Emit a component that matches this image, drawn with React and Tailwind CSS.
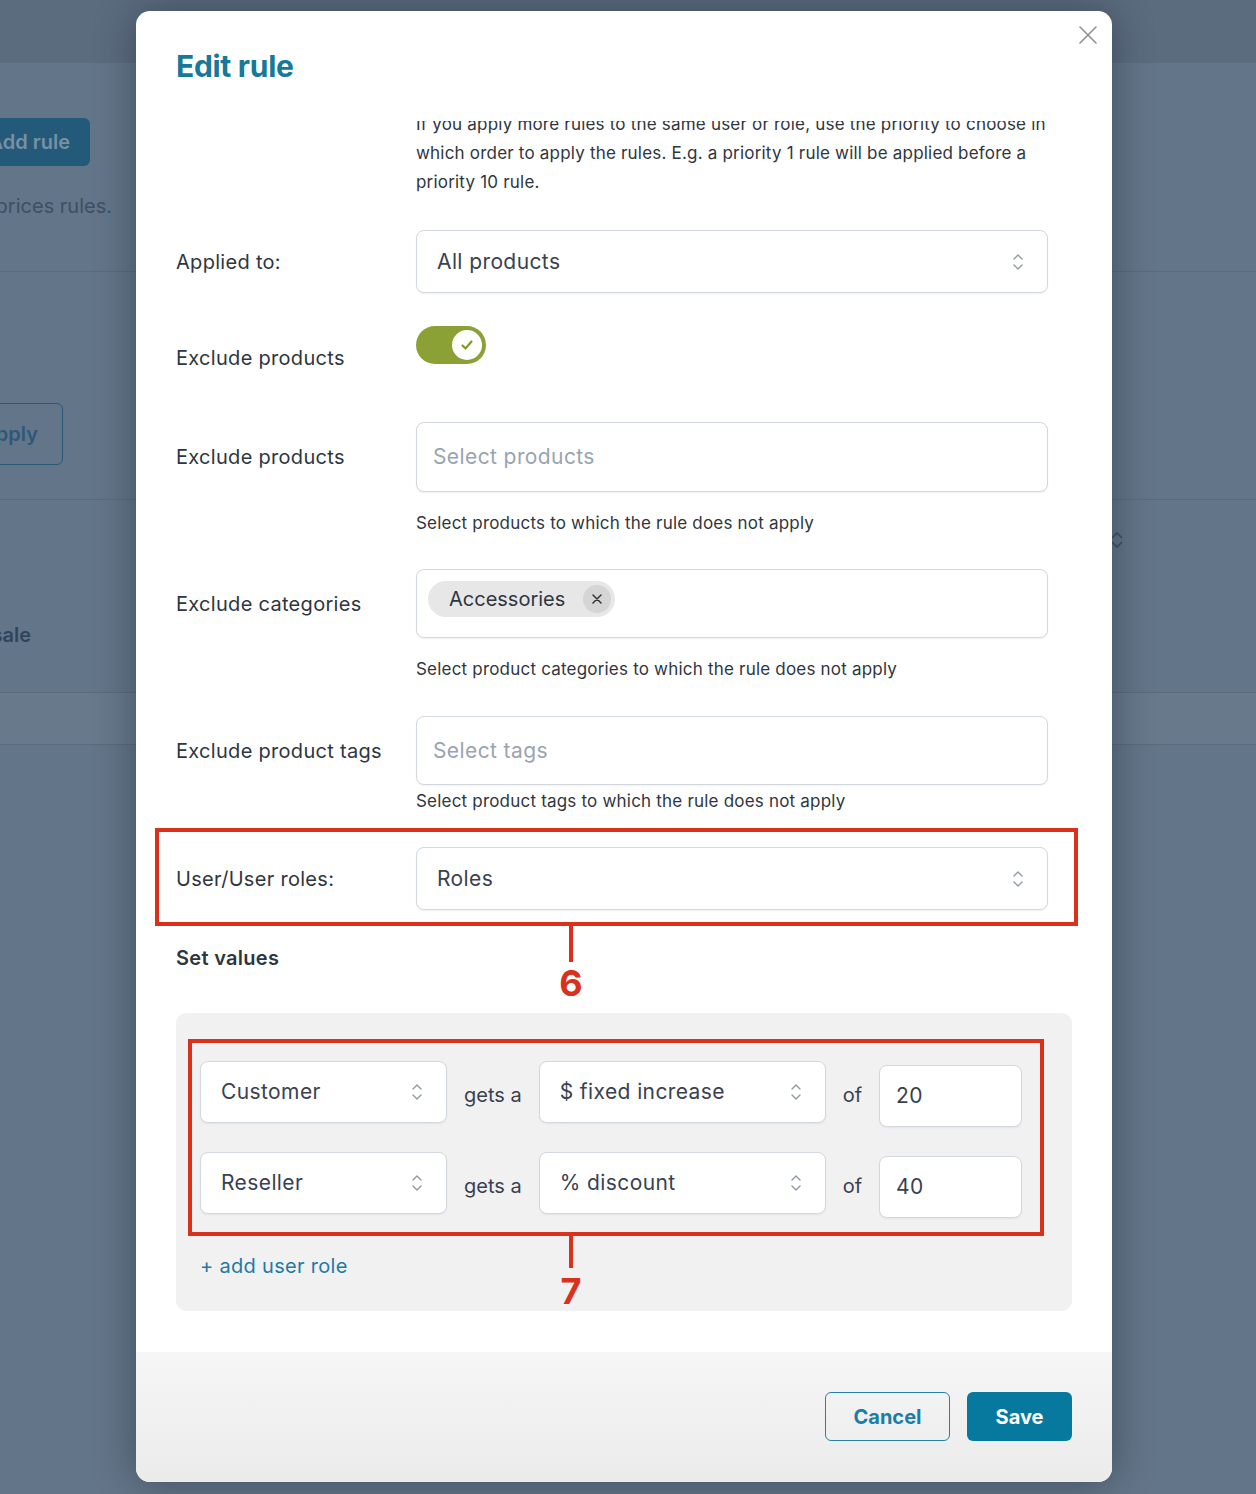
import React from 'react';

const UpDown = ({ className = '' }) => (
  <svg width="12" height="22" viewBox="0 0 12 22" fill="none" stroke="currentColor" strokeWidth="1.4" strokeLinecap="round" strokeLinejoin="round" className={className}>
    <path d="M2 8 L6 4 L10 8" />
    <path d="M2 14 L6 18 L10 14" />
  </svg>
);

const Select = ({ value, className = '' }) => (
  <div className={`flex items-center justify-between rounded-lg border border-[#d3d8de] bg-white pl-5 pr-[23px] shadow-[0_1px_2px_rgba(0,0,0,0.06)] ${className}`}>
    <span className="text-[21px] tracking-[0.4px] text-[#394150]">{value}</span>
    <UpDown className="text-[#8f9aa6]" />
  </div>
);

const Row = ({ label, labelH, className = '', children }) => (
  <div className={`grid grid-cols-[240px_632px] ${className}`}>
    <div className={`flex items-center text-[20px] tracking-[0.3px] text-[#2f3640] ${labelH}`}>{label}</div>
    <div>{children}</div>
  </div>
);

const Help = ({ className = '', children }) => (
  <p className={`text-[17px] leading-6 tracking-[0.2px] text-[#2f3640] ${className}`}>{children}</p>
);

const RoleRow = ({ role, type, amount, className = '' }) => (
  <div className={`flex items-start gap-[17px] ${className}`}>
    <Select value={role} className="h-[62px] w-[247px]" />
    <span className="mt-[20px] text-[20px] leading-7 text-[#394150]">gets a</span>
    <Select value={type} className="h-[62px] w-[287px]" />
    <span className="mt-[20px] text-[20px] leading-7 text-[#394150]">of</span>
    <div className="mt-[4px] flex h-[62px] w-[143px] items-center rounded-lg border border-[#d3d8de] bg-white pl-4 text-[21px] tracking-[0.4px] text-[#394150] shadow-[0_1px_2px_rgba(0,0,0,0.06)]">
      {amount}
    </div>
  </div>
);

const App = () => {
  return (
    <div className="relative h-[1494px] w-[1256px] overflow-hidden bg-[#637588] font-['Inter',sans-serif]">
      {/* page behind the dialog */}
      <div className="h-[63px] bg-[#5c6c7f]" />
      <div className="flex h-[209px] justify-between border-b border-[#5a6b7d]">
        <div className="relative w-[136px] overflow-hidden">
          <div className="mt-[55px] flex w-[90px] justify-end">
            <div className="flex h-[48px] shrink-0 items-center whitespace-nowrap rounded-md bg-[#235a79] px-5 text-[20px] font-semibold text-[#7790a3]">
              Add rule
            </div>
          </div>
          <div className="mt-[26px] flex w-[112px] justify-end">
            <span className="shrink-0 whitespace-nowrap text-[20px] leading-7 text-[#3d5064]">Manage prices rules.</span>
          </div>
        </div>
      </div>
      <div className="flex h-[228px] border-b border-[#5a6b7d]">
        <div className="w-[136px] overflow-hidden">
          <div className="mt-[131px] flex w-[63px] justify-end">
            <div className="flex h-[62px] shrink-0 items-center whitespace-nowrap rounded-md border border-[#2d5777] px-6 text-[20px] font-semibold text-[#2d5879]">
              Apply
            </div>
          </div>
        </div>
      </div>
      <div className="flex h-[193px] justify-between border-b border-[#5a6b7d]">
        <div className="w-[136px] overflow-hidden">
          <div className="mt-[121px] flex w-[31px] justify-end">
            <span className="shrink-0 whitespace-nowrap text-[20px] font-semibold leading-7 text-[#30455a]">On sale</span>
          </div>
        </div>
        <div className="w-[144px]">
          <svg width="14" height="18" viewBox="0 0 14 18" fill="none" stroke="#3d4f62" strokeWidth="1.6" className="ml-[-2px] mt-[31px]">
            <path d="M2 7 L7 2 L12 7" />
            <path d="M2 11 L7 16 L12 11" />
          </svg>
        </div>
      </div>
      <div className="h-[52px] border-b border-[#5a6b7d] bg-[#67798b]" />

      {/* dialog */}
      <div className="absolute inset-0 pl-[136px] pt-[11px]">
        <div className="flex h-[1471px] w-[976px] flex-col overflow-hidden rounded-[14px] bg-white shadow-[0_0_40px_rgba(20,30,45,0.45)]">
          <div className="relative h-[110px] shrink-0 px-10 pt-[37px]">
            <h1 className="text-[30px] font-bold leading-9 tracking-[-0.3px] text-[#16799c]">Edit rule</h1>
            <svg width="20" height="20" viewBox="0 0 20 20" stroke="#8f8f8f" strokeWidth="1.6" strokeLinecap="round" className="absolute right-[14px] top-[14px]">
              <path d="M2 2 L18 18 M18 2 L2 18" />
            </svg>
          </div>

          <div className="flex-1 overflow-hidden pl-10 pr-10">
            <Row label="" labelH="" className="-mt-[11px]">
              <p className="text-[17px] leading-[29px] tracking-[0.2px] text-[#2f3640]">
                If you apply more rules to the same user or role, use the priority to choose in which order to apply the rules. E.g. a priority 1 rule will be applied before a priority 10 rule.
              </p>
            </Row>

            <Row label="Applied to:" labelH="h-[63px]" className="mt-[33px]">
              <Select value="All products" className="h-[63px]" />
            </Row>

            <Row label="Exclude products" labelH="h-[64px]" className="mt-[33px]">
              <div className="flex h-[38px] w-[70px] items-center justify-end rounded-full bg-[#8ba136] pr-[4px]">
                <div className="flex h-[30px] w-[30px] items-center justify-center rounded-full bg-white">
                  <svg width="14" height="14" viewBox="0 0 14 14" fill="none" stroke="#7f9a2c" strokeWidth="2.2" strokeLinecap="round" strokeLinejoin="round">
                    <path d="M2.5 7.5 L5.5 10.5 L11.5 3.5" />
                  </svg>
                </div>
              </div>
            </Row>

            <Row label="Exclude products" labelH="h-[70px]" className="mt-[32px]">
              <div className="flex h-[70px] items-center rounded-lg border border-[#d3d8de] bg-white pl-4 shadow-[0_1px_2px_rgba(0,0,0,0.06)]">
                <span className="text-[21px] tracking-[0.4px] text-[#98a4b1]">Select products</span>
              </div>
              <Help className="mt-[19px]">Select products to which the rule does not apply</Help>
            </Row>

            <Row label="Exclude categories" labelH="h-[69px]" className="mt-[34px]">
              <div className="flex h-[69px] items-start rounded-lg border border-[#d3d8de] bg-white pl-[11px] pt-[11px] shadow-[0_1px_2px_rgba(0,0,0,0.06)]">
                <div className="flex h-[36px] items-center gap-[18px] rounded-full bg-[#e7e7e7] pl-[21px] pr-[4px]">
                  <span className="text-[20px] text-[#2f3640]">Accessories</span>
                  <span className="flex h-[28px] w-[28px] items-center justify-center rounded-full bg-[#d5d5d5]">
                    <svg width="10" height="10" viewBox="0 0 10 10" stroke="#333" strokeWidth="1.5" strokeLinecap="round">
                      <path d="M1 1 L9 9 M9 1 L1 9" />
                    </svg>
                  </span>
                </div>
              </div>
              <Help className="mt-[19px]">Select product categories to which the rule does not apply</Help>
            </Row>

            <Row label="Exclude product tags" labelH="h-[69px]" className="mt-[35px]">
              <div className="flex h-[69px] items-center rounded-lg border border-[#d3d8de] bg-white pl-4 shadow-[0_1px_2px_rgba(0,0,0,0.06)]">
                <span className="text-[21px] tracking-[0.4px] text-[#98a4b1]">Select tags</span>
              </div>
              <Help className="mt-[4px]">Select product tags to which the rule does not apply</Help>
            </Row>

            <div className="-ml-[21px] mt-[15px] w-[923px] border-4 border-[#d9311b] pb-[12px] pl-[17px] pt-[15px]">
              <Row label="User/User roles:" labelH="h-[63px]">
                <Select value="Roles" className="h-[63px]" />
              </Row>
            </div>

            <div className="relative">
              <h2 className="pt-[18px] text-[20px] font-semibold leading-7 tracking-[0.3px] text-[#2f3640]">Set values</h2>
              <div className="absolute left-[381px] top-0 flex w-[28px] flex-col items-center">
                <div className="h-[36px] w-[4px] bg-[#d9311b]" />
                <span className="mt-[3px] text-[36px] font-bold leading-9 text-[#d9311b]">6</span>
              </div>
            </div>

            <div className="mt-[41px] w-[896px] rounded-[10px] bg-[#f1f1f1] px-6 pb-[31px] pt-[48px]">
              <div className="relative">
                <RoleRow role="Customer" type="$ fixed increase" amount="20" />
                <RoleRow role="Reseller" type="% discount" amount="40" className="mt-[25px]" />
                <div className="pointer-events-none absolute -bottom-[18px] -left-[12px] -top-[22px] right-[4px] border-4 border-[#d9311b]" />
                <div className="absolute left-[357px] top-[175px] flex w-[28px] flex-col items-center">
                  <div className="h-[32px] w-[4px] bg-[#d9311b]" />
                  <span className="mt-[5px] text-[36px] font-bold leading-9 text-[#d9311b]">7</span>
                </div>
              </div>
              <div className="mt-[34px] text-[20px] leading-7 tracking-[0.3px] text-[#1f7aa3]">+ add user role</div>
            </div>
          </div>

          <div className="flex h-[130px] shrink-0 items-start justify-end gap-[17px] bg-gradient-to-b from-[#f6f6f6] to-[#ebebeb] pr-10 pt-[40px]">
            <button className="flex h-[49px] w-[125px] items-center justify-center rounded-md border border-[#2282a8] bg-transparent text-[20px] font-bold text-[#1b7ea5]">
              Cancel
            </button>
            <button className="flex h-[49px] w-[105px] items-center justify-center rounded-md bg-[#07799f] text-[20px] font-bold text-white">
              Save
            </button>
          </div>
        </div>
      </div>
    </div>
  );
};

export default App;
